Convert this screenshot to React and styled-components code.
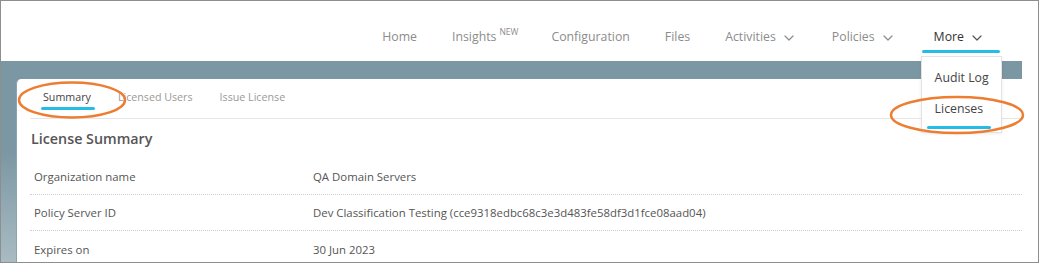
import React from 'react';
import styled, { createGlobalStyle } from 'styled-components';

const GlobalStyle = createGlobalStyle`
  body {
    margin: 0;
    background: #fff;
    font-family: 'Open Sans', 'Noto Sans', sans-serif;
  }
`;

const Frame = styled.div`
  position: relative;
  box-sizing: border-box;
  width: 1039px;
  height: 263px;
  border: 1px solid #8e8e8e;
  overflow: hidden;
  display: flex;
  flex-direction: column;
`;

const Header = styled.header`
  height: 60px;
  flex-shrink: 0;
  background: #fff;
  display: flex;
  justify-content: flex-end;
  align-items: flex-start;
  padding: 27px 56px 0 0;
  box-sizing: border-box;
  position: relative;
  z-index: 2;
`;

const NavItem = styled.div`
  position: relative;
  display: flex;
  align-items: center;
  margin-left: ${p => p.$gap || 0}px;
  font-size: 12.3px;
  line-height: 18px;
  color: ${p => (p.$active ? '#333' : '#8c8c8c')};
  white-space: nowrap;

  ${p => p.$active && `
    &::after {
      content: '';
      position: absolute;
      left: -12px;
      right: -18px;
      top: 22px;
      height: 3px;
      border-radius: 2px;
      background: #25bde6;
    }
  `}
`;

const Sup = styled.span`
  font-size: 8.5px;
  line-height: 1;
  margin-left: 3px;
  position: relative;
  top: -5px;
`;

const Chevron = styled.svg`
  width: 10px;
  height: 6px;
  margin-left: 8px;
  margin-top: 1px;
  color: ${p => (p.$active ? '#555' : 'inherit')};
`;

const Menu = styled.div`
  position: absolute;
  top: 28px;
  left: -13px;
  width: 81px;
  box-sizing: border-box;
  padding: 5px 0 0;
  height: 77px;
  background: #fff;
  border: 1px solid #e3e3e3;
  box-shadow: 0 1px 3px rgba(0, 0, 0, 0.08);
  z-index: 3;
`;

const MenuItem = styled.div`
  position: relative;
  height: 31px;
  display: flex;
  align-items: center;
  padding-left: 13px;
  font-size: 12.3px;
  color: #444;

  ${p => p.$active && `
    &::after {
      content: '';
      position: absolute;
      left: 5px;
      width: 64px;
      bottom: -5px;
      height: 3px;
      border-radius: 2px;
      background: #25bde6;
    }
  `}
`;

const Main = styled.main`
  flex: 1;
  display: flex;
  padding: 18px 0 0 15px;
  background:
    linear-gradient(to right, transparent 1021px, #fff 1021px),
    linear-gradient(to bottom, #7b97a3 45%, #a9bbc3 100%);
  min-height: 0;
`;

const Card = styled.section`
  flex: 1;
  background: #fff;
  border-top-left-radius: 5px;
  border-left: 1px solid #8ea3ac;
  padding: 0 16px 0 13px;
  display: flex;
  flex-direction: column;
`;

const Tabs = styled.nav`
  display: flex;
  flex-shrink: 0;
  height: 40px;
  box-sizing: border-box;
  padding-top: 11px;
  border-bottom: 1px solid #e6e6e6;
`;

const Tab = styled.div`
  position: relative;
  padding: 0 13px 0 ${p => (p.$first ? 13 : 14)}px;
  font-size: 10.7px;
  line-height: 14px;
  color: ${p => (p.$active ? '#444' : '#9a9a9a')};
  height: 14px;

  ${p => p.$active && `
    &::after {
      content: '';
      position: absolute;
      left: 11px;
      right: 9px;
      top: 17px;
      height: 3px;
      border-radius: 2px;
      background: #25bde6;
    }
  `}
`;

const Heading = styled.h2`
  flex-shrink: 0;
  margin: 11px 0 11px 1px;
  font-size: 14.3px;
  line-height: 18px;
  font-weight: 600;
  color: #555;
`;

const Row = styled.div`
  display: grid;
  grid-template-columns: 279px 1fr;
  align-items: center;
  height: 36px;
  box-sizing: border-box;
  padding-left: 4px;
  border-bottom: 1px dotted #cfcfcf;
  font-size: 11.4px;
  color: #555;
  flex-shrink: 0;

  &:last-child {
    border-bottom: none;
  }
`;

const Annotations = styled.svg`
  position: absolute;
  left: -1px;
  top: -1px;
  width: 1040px;
  height: 264px;
  pointer-events: none;
  z-index: 5;
`;

const Down = ({ active }) => (
  <Chevron viewBox="0 0 10 6" $active={active}>
    <path d="M1 1l4 4 4-4" fill="none" stroke="currentColor" strokeWidth="1.2" strokeLinecap="round" strokeLinejoin="round" />
  </Chevron>
);

const rows = [
  ['Organization name', 'QA Domain Servers'],
  ['Policy Server ID', 'Dev Classification Testing (cce9318edbc68c3e3d483fe58df3d1fce08aad04)'],
  ['Expires on', '30 Jun 2023'],
];

const App = () => (
  <>
    <GlobalStyle />
    <Frame>
      <Header>
        <NavItem>Home</NavItem>
        <NavItem $gap={35}>Insights<Sup>NEW</Sup></NavItem>
        <NavItem $gap={33}>Configuration</NavItem>
        <NavItem $gap={35}>Files</NavItem>
        <NavItem $gap={35}>Activities<Down /></NavItem>
        <NavItem $gap={38}>Policies<Down /></NavItem>
        <NavItem $gap={41} $active>
          More<Down active />
          <Menu>
            <MenuItem>Audit Log</MenuItem>
            <MenuItem $active>Licenses</MenuItem>
          </Menu>
        </NavItem>
      </Header>
      <Main>
        <Card>
          <Tabs>
            <Tab $first $active>Summary</Tab>
            <Tab>Licensed Users</Tab>
            <Tab>Issue License</Tab>
          </Tabs>
          <Heading>License Summary</Heading>
          {rows.map(([label, value]) => (
            <Row key={label}>
              <span>{label}</span>
              <span>{value}</span>
            </Row>
          ))}
        </Card>
      </Main>
      <Annotations viewBox="0 0 1040 264">
        <ellipse cx="72" cy="100" rx="53" ry="17.5" fill="none" stroke="#ed7d31" strokeWidth="2.5" />
        <ellipse cx="957" cy="115" rx="66" ry="18" fill="none" stroke="#ed7d31" strokeWidth="2.5" />
      </Annotations>
    </Frame>
  </>
);

export default App;
